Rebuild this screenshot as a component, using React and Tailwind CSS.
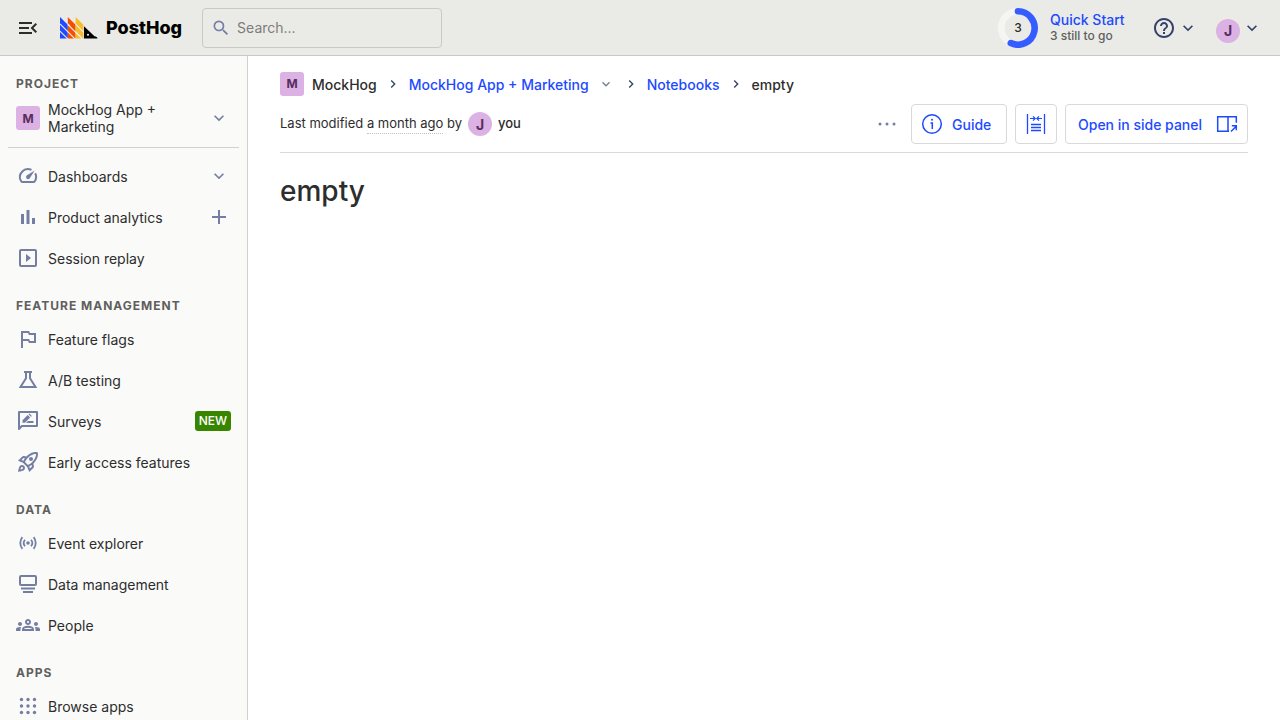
import React from 'react'
import {
  MdMenuOpen, MdSearch, MdHelpOutline, MdExpandMore, MdChevronRight, MdAdd,
  MdOutlinedFlag, MdOutlineRocketLaunch, MdOutlineGroups,
} from 'react-icons/md'

function Svg({ children, className = 'size-6' }) {
  return (
    <svg viewBox="0 0 24 24" fill="none" stroke="currentColor" strokeWidth="2" className={className} aria-hidden="true">
      {children}
    </svg>
  )
}

const GaugeIcon = () => (
  <Svg>
    <path d="M15.5 5.9A8 8 0 0 0 5.2 17.3c.3.5.6.7 1.2.7h11.2c.6 0 .9-.2 1.2-.7A8 8 0 0 0 19.2 9.3" />
    <path d="M18.6 6.4 13.6 14.4a2 2 0 1 1-3-2.9z" fill="currentColor" stroke="none" />
  </Svg>
)

const BarsIcon = () => (
  <Svg>
    <path d="M5 9h3v10H5zM10.5 5h3v14h-3zM16 13h3v6h-3z" fill="currentColor" stroke="none" />
  </Svg>
)

const ReplayIcon = () => (
  <Svg>
    <rect x="4" y="4" width="16" height="16" rx="1" />
    <path d="M10 8v8l5-4z" fill="currentColor" stroke="none" />
  </Svg>
)

const FlaskIcon = () => (
  <Svg>
    <path d="M8 4h8M10 4v6.2L4.5 19h15L14 10.2V4" />
  </Svg>
)

const SurveyIcon = () => (
  <Svg>
    <path d="M3 20V3h18v14H5.8z" strokeLinejoin="round" />
    <path d="M6.5 13.8v-2.5l5.2-5.2 2.5 2.5L9 13.8zM12.5 5.3l.9-.9 2.5 2.5-.9.9zM12 12h5.5v2H10z" fill="currentColor" stroke="none" />
  </Svg>
)

const LiveIcon = () => (
  <Svg>
    <path d="M6.4 6.2a9 9 0 0 0 0 11.6M17.6 6.2a9 9 0 0 1 0 11.6M9 8.7a5.2 5.2 0 0 0 0 6.6M15 8.7a5.2 5.2 0 0 1 0 6.6" strokeWidth="1.8" />
    <circle cx="12" cy="12" r="1.8" fill="currentColor" stroke="none" />
  </Svg>
)

const DataIcon = () => (
  <Svg>
    <rect x="4" y="4" width="16" height="9" rx="1" />
    <path d="M5 16.5h14M7 20h10" />
  </Svg>
)

const AppsIcon = () => (
  <Svg>
    {[5.5, 12, 18.5].map((y) =>
      [5.5, 12, 18.5].map((x) => <circle key={`${x}-${y}`} cx={x} cy={y} r="1.7" fill="currentColor" stroke="none" />)
    )}
  </Svg>
)

const InfoIcon = () => (
  <Svg>
    <circle cx="12" cy="12" r="9.3" strokeWidth="1.5" />
    <path d="M10.5 11h1.8v6" strokeWidth="1.5" />
    <circle cx="12" cy="7.8" r="1" fill="currentColor" stroke="none" />
  </Svg>
)

const WidthIcon = () => (
  <Svg>
    <path d="M3.5 2v20M20.5 2v20M7 12.5h10M7 15.5h10M7 18.5h10" strokeWidth="1.3" />
    <path d="M6 6.5h5M9 4.3l2.2 2.2L9 8.7M18 6.5h-5M15 4.3l-2.2 2.2L15 8.7" strokeWidth="1.2" />
  </Svg>
)

const SidePanelIcon = () => (
  <Svg>
    <path d="M14 19.3H2.7V4.7h18.6v6M13 4.7v14.6" strokeWidth="1.5" />
    <path d="M16 19.5l5-5M16.8 13.7h4.5v4.5" strokeWidth="1.5" />
  </Svg>
)

function LogoMark() {
  return (
    <svg viewBox="0 0 38 22" className="h-[22px] w-[38px]" aria-hidden="true">
      <path fill="#1d4aff" d="M0 0 7.8 7.8V21.5H0z" />
      <path fill="#f54e00" d="M7.8 0 15.6 7.8V21.5H7.8z" />
      <path fill="#f9bd2b" d="M15.6 0 23.4 7.8V21.5h-7.8z" />
      <path d="M0 6.9 15.6 22.5M0 14.1 8 22.1M7.8 7.5 23 22.7M7.8 6.9 10 9.1M15.6 7.1 24 15.5M15.6 14.7 24 23.1" stroke="#eaebe6" strokeWidth="1.1" />
      <path d="M24 9.2 34.5 19.3c1.6.3 2.9.8 3 2.2H24z" fill="#000" />
      <circle cx="28" cy="17.8" r="1" fill="#fff" />
    </svg>
  )
}

function Lettermark({ letter, round }) {
  return (
    <span
      className={
        round
          ? 'flex size-6 shrink-0 items-center justify-center rounded-full bg-[#dcb1e3] text-[14px] font-bold text-[#572e5e]'
          : 'flex size-6 shrink-0 items-center justify-center rounded-[3px] bg-[#dcb1e3] text-[12px] font-bold text-[#572e5e]'
      }
    >
      {letter}
    </span>
  )
}

function TopBar() {
  return (
    <header className="flex h-14 shrink-0 items-center border-b border-[#c9cac6] bg-[#eaebe6] px-4">
      <button aria-label="Collapse sidebar" className="text-[#2d2d2d]"><MdMenuOpen className="size-6" /></button>
      <a href="#home" className="ml-5 flex items-center gap-2 text-[18px] font-extrabold leading-6 text-black">
        <LogoMark />
        PostHog
      </a>
      <label className="ml-5 flex h-10 w-60 items-center gap-1 rounded border border-[#c9cac6] px-2 text-[#747ea3]">
        <MdSearch className="size-5" />
        <input
          aria-label="Search"
          placeholder="Search..."
          className="min-w-0 flex-1 bg-transparent px-0.5 text-[14px] text-[#2d2d2d] outline-none placeholder:text-[#7d7d7b]"
        />
      </label>
      <button className="ml-auto flex items-center gap-3 text-left">
        <span className="grid size-10 place-items-center">
          <svg viewBox="0 0 40 40" className="col-start-1 row-start-1 size-10" fill="none" aria-hidden="true">
            <circle cx="20" cy="20" r="16.7" stroke="#f5f5f4" strokeWidth="6.6" />
            <path d="M20 3.3A16.7 16.7 0 1 1 12.8 35.1" stroke="#345cff" strokeWidth="6.6" strokeLinecap="round" />
          </svg>
          <span className="col-start-1 row-start-1 text-[12px] font-medium text-[#2d2d2d]">3</span>
        </span>
        <span className="flex min-w-[78px] flex-col">
          <span className="text-[14px] font-medium leading-4 text-[#1d4aff]">Quick Start</span>
          <span className="text-[12px] font-medium leading-4 text-[#5f5f5d]">3 still to go</span>
        </span>
      </button>
      <button aria-label="Help" className="ml-6 flex items-center gap-0.5 text-[#35416b]">
        <MdHelpOutline className="size-6" />
        <MdExpandMore className="size-5" />
      </button>
      <button aria-label="Account" className="ml-[18px] mr-0.5 flex items-center gap-0.5 text-[#35416b]">
        <span className="pt-1.5"><Lettermark letter="J" round /></span>
        <MdExpandMore className="size-5" />
      </button>
    </header>
  )
}

const sections = [
  {
    items: [
      { label: 'Dashboards', icon: GaugeIcon, side: 'expand' },
      { label: 'Product analytics', icon: BarsIcon, side: 'add' },
      { label: 'Session replay', icon: ReplayIcon },
    ],
  },
  {
    title: 'Feature management',
    items: [
      { label: 'Feature flags', icon: MdOutlinedFlag },
      { label: 'A/B testing', icon: FlaskIcon },
      { label: 'Surveys', icon: SurveyIcon, side: 'new' },
      { label: 'Early access features', icon: MdOutlineRocketLaunch },
    ],
  },
  {
    title: 'Data',
    items: [
      { label: 'Event explorer', icon: LiveIcon },
      { label: 'Data management', icon: DataIcon },
      { label: 'People', icon: MdOutlineGroups },
    ],
  },
  { title: 'Apps', items: [{ label: 'Browse apps', icon: AppsIcon }] },
]

function NavItem({ label, icon: Icon, side }) {
  return (
    <li className="flex h-10 items-center px-2">
      <a href="#nav" className="flex flex-1 items-center gap-2 text-[14px] text-[#2d2d2d]">
        <span className="text-[#747ea3]"><Icon className="size-6" /></span>
        {label}
      </a>
      {side === 'expand' && (
        <button aria-label="Show dashboards" className="mr-0.5 text-[#747ea3]"><MdExpandMore className="size-5" /></button>
      )}
      {side === 'add' && (
        <button aria-label="New insight" className="text-[#747ea3]"><MdAdd className="size-6" /></button>
      )}
      {side === 'new' && (
        <span className="rounded-[3px] bg-[#388600] px-1 text-[12px] font-medium leading-5 text-white">NEW</span>
      )}
    </li>
  )
}

function SectionTitle({ children }) {
  return <h2 className="px-2 text-[12px] font-bold uppercase leading-5 tracking-[1px] text-[#5f5f5d]">{children}</h2>
}

function Sidebar() {
  return (
    <nav className="w-[248px] shrink-0 overflow-hidden border-r border-[#d0d1cd] bg-[#fafaf9] px-2 pt-[18px]">
      <SectionTitle>Project</SectionTitle>
      <button className="mt-1 flex h-10 w-full items-center gap-2 px-2 text-left text-[14px] leading-[17px] text-[#2d2d2d]">
        <Lettermark letter="M" />
        <span className="flex-1">MockHog App + Marketing</span>
        <MdExpandMore className="mr-0.5 size-5 text-[#747ea3]" />
      </button>
      <hr className="mt-[9px] border-[#d0d1cd]" />
      <div className="mt-2 flex flex-col gap-[18px]">
        {sections.map((s, i) => (
          <section key={i}>
            {s.title && <SectionTitle>{s.title}</SectionTitle>}
            <ul className={s.title ? 'mt-[3px] flex flex-col gap-px' : 'flex flex-col gap-px'}>
              {s.items.map((item) => <NavItem key={item.label} {...item} />)}
            </ul>
          </section>
        ))}
      </div>
    </nav>
  )
}

function Breadcrumbs() {
  const sep = <MdChevronRight className="size-4 text-[#35416b]" aria-hidden="true" />
  return (
    <nav aria-label="Breadcrumbs" className="flex h-6 items-center gap-2 text-[14px] font-medium text-[#2d2d2d]">
      <Lettermark letter="M" />
      <span>MockHog</span>
      {sep}
      <a href="#project" className="text-[#1d4aff]">MockHog App + Marketing</a>
      <button aria-label="Switch project" className="mx-px text-[#747ea3]"><MdExpandMore className="size-4" /></button>
      {sep}
      <a href="#notebooks" className="text-[#1d4aff]">Notebooks</a>
      {sep}
      <span>empty</span>
    </nav>
  )
}

const buttonClass =
  'flex h-10 items-center gap-2 rounded border border-[#d9d9d9] bg-white text-[14px] font-medium text-[#1d4aff]'

export default function App() {
  return (
    <div className="flex h-screen flex-col overflow-hidden bg-white font-['Inter',sans-serif] text-[#2d2d2d]">
      <TopBar />
      <div className="flex min-h-0 flex-1">
        <Sidebar />
        <main className="min-w-0 flex-1 px-8 pt-4">
          <Breadcrumbs />
          <div className="flex items-center justify-between border-b border-[#d9d9d9] py-2">
            <div className="flex items-center text-[13px]">
              <span>Last modified&nbsp;</span>
              <span className="border-b border-dotted border-[#c0c0c0]">a month ago</span>
              <span className="mr-[6px]">&nbsp;by</span>
              <Lettermark letter="J" round />
              <span className="ml-[6px] font-medium">you</span>
            </div>
            <div className="flex items-center gap-2">
              <button aria-label="More" className="px-1 text-[#747ea3]">
                <Svg>
                  <g fill="currentColor" stroke="none">
                    <circle cx="5" cy="12" r="1.5" /><circle cx="12" cy="12" r="1.5" /><circle cx="19" cy="12" r="1.5" />
                  </g>
                </Svg>
              </button>
              <button className={buttonClass + ' min-w-24 pl-2 pr-3'}><InfoIcon />Guide</button>
              <button aria-label="Fixed width" className={buttonClass + ' px-2'}><WidthIcon /></button>
              <button className={buttonClass + ' min-w-[183px] justify-between pl-3 pr-2'}>Open in side panel<SidePanelIcon /></button>
            </div>
          </div>
          <h1 className="mt-5 text-[28px] font-medium leading-9">empty</h1>
        </main>
      </div>
    </div>
  )
}
